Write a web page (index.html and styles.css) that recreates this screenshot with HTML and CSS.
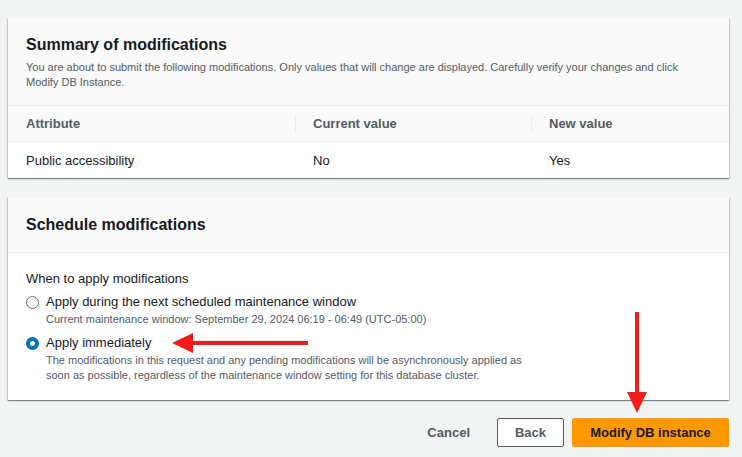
FILE: index.html
```html
<!DOCTYPE html>
<html>
<head>
<meta charset="utf-8">
<link rel="stylesheet" href="styles.css">
</head>
<body>
<div class="page">
  <section class="card">
    <div class="card-head summary-head">
      <h2 class="title">Summary of modifications</h2>
      <p class="desc">You are about to submit the following modifications. Only values that will change are displayed. Carefully verify your changes and click Modify DB Instance.</p>
    </div>
    <div class="trow thead">
      <div class="cell c1">Attribute</div>
      <div class="cell c2"><span class="divider"></span>Current value</div>
      <div class="cell c3"><span class="divider"></span>New value</div>
    </div>
    <div class="trow tbody">
      <div class="cell c1">Public accessibility</div>
      <div class="cell c2">No</div>
      <div class="cell c3">Yes</div>
    </div>
  </section>

  <section class="card">
    <div class="card-head schedule-head">
      <h2 class="title">Schedule modifications</h2>
    </div>
    <div class="card-body">
      <div class="label">When to apply modifications</div>
      <div class="radio-row">
        <span class="radio"></span>
        <div class="radio-text">
          <div class="radio-label">Apply during the next scheduled maintenance window</div>
          <div class="radio-desc">Current maintenance window: September 29, 2024 06:19 - 06:49 (UTC-05:00)</div>
        </div>
      </div>
      <div class="radio-row second">
        <span class="radio checked"></span>
        <div class="radio-text">
          <div class="radio-label">Apply immediately</div>
          <div class="radio-desc">The modifications in this request and any pending modifications will be asynchronously applied as<br>soon as possible, regardless of the maintenance window setting for this database cluster.</div>
        </div>
      </div>
    </div>
  </section>

  <div class="actions">
    <button class="btn link">Cancel</button>
    <button class="btn normal">Back</button>
    <button class="btn primary">Modify DB instance</button>
  </div>
</div>

<svg class="arrow arrow-left" width="140" height="24" viewBox="0 0 140 24">
  <rect x="18" y="10" width="118" height="4" fill="#f61b1b"/>
  <polygon points="0,12 21,2 21,22" fill="#f61b1b"/>
</svg>
<svg class="arrow arrow-down" width="24" height="104" viewBox="0 0 24 104">
  <rect x="10" y="0" width="4" height="86" fill="#f61b1b"/>
  <polygon points="2,80 22,80 12,101" fill="#f61b1b"/>
</svg>
</body>
</html>
```
FILE: styles.css
```css
* { box-sizing: border-box; }
html, body { margin: 0; padding: 0; }
body {
  background: #f2f3f3;
  font-family: "Liberation Sans", Arial, sans-serif;
  color: #16191f;
  width: 742px;
  height: 457px;
  overflow: hidden;
  position: relative;
}
.page {
  padding: 18px 13px 0 8px;
  display: flex;
  flex-direction: column;
}
.card {
  background: #fff;
  box-shadow: 0 1px 1px 0 rgba(0,28,36,.3), 1px 1px 1px 0 rgba(0,28,36,.15), -1px 1px 1px 0 rgba(0,28,36,.15);
  margin-bottom: 19px;
}
.card-head {
  background: #fafafa;
  padding: 0 18px;
}
.summary-head {
  height: 87px;
  padding-top: 16px;
}
.schedule-head {
  height: 56px;
  border-bottom: 1px solid #eaeded;
  display: flex;
  align-items: center;
}
.title {
  margin: 0;
  font-size: 16px;
  font-weight: 700;
  line-height: 22px;
  color: #16191f;
}
.desc {
  margin: 4px 0 0;
  font-size: 11px;
  line-height: 15px;
  color: #545b64;
}
.trow {
  display: flex;
  height: 37px;
  align-items: center;
  font-size: 13px;
}
.thead {
  background: #fafafa;
  border-top: 1px solid #eaeded;
  border-bottom: 1px solid #eaeded;
  font-weight: 700;
  color: #545b64;
}
.tbody { height: 36px; }
.cell {
  position: relative;
  padding-left: 18px;
  height: 100%;
  display: flex;
  align-items: center;
}
.c1 { width: 287px; }
.c2 { width: 236px; }
.c3 { flex: 1; }
.divider {
  position: absolute;
  left: 0;
  top: 9px;
  height: 18px;
  border-left: 1px solid #eaeded;
}
.card-body {
  padding: 17px 18px 17px;
}
.label {
  font-size: 13px;
  line-height: 18px;
  margin-bottom: 5px;
}
.radio-row {
  display: flex;
  gap: 7px;
}
.radio-row.second { margin-top: 7px; }
.radio {
  flex: none;
  width: 13px;
  height: 13px;
  border: 1.5px solid #687078;
  border-radius: 50%;
  margin-top: 3px;
  background: #fff;
}
.radio.checked {
  border: 4px solid #0073bb;
}
.radio-label {
  font-size: 13px;
  line-height: 18px;
}
.radio-desc {
  font-size: 11px;
  line-height: 15px;
  color: #545b64;
  margin-top: 1px;
}
.actions {
  display: flex;
  justify-content: flex-end;
  align-items: center;
  gap: 8px;
  margin-top: -1px;
}
.btn {
  font-family: inherit;
  font-size: 13px;
  font-weight: 700;
  height: 29px;
  border-radius: 2px;
  cursor: pointer;
  color: #545b64;
}
.link {
  background: none;
  border: 1px solid transparent;
  padding: 0 18px;
  margin-right: 0;
}
.normal {
  background: #fff;
  border: 1px solid #545b64;
  width: 67px;
}
.primary {
  background: #ff9900;
  border: 1px solid #ff9900;
  color: #16191f;
  width: 157px;
}
.arrow { position: absolute; }
.arrow-left { left: 172px; top: 331px; }
.arrow-down { left: 625px; top: 312px; }
```
